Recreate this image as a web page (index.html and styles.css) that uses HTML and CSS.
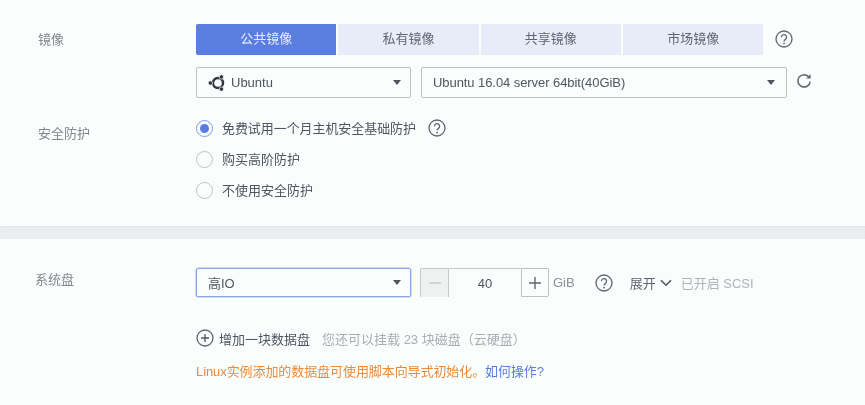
FILE: index.html
```html
<!DOCTYPE html>
<html lang="zh">
<head>
<meta charset="utf-8">
<title>镜像</title>
<link rel="stylesheet" href="styles.css">
</head>
<body>
<section class="panel panel-top">
  <div class="row row-image">
    <div class="label label-image">镜像</div>
    <div class="body">
      <div class="line tabs">
        <div class="tab tab-active">公共镜像</div>
        <div class="tab">私有镜像</div>
        <div class="tab">共享镜像</div>
        <div class="tab">市场镜像</div>
        <svg class="icon help help-tabs" viewBox="0 0 18 18"><use href="#q"/></svg>
      </div>
      <div class="line selects">
        <div class="select select-os">
          <svg class="ubuntu" viewBox="0 0 18 18">
            <circle cx="10" cy="9" r="5" fill="none" stroke="#2f3642" stroke-width="2.4"/>
            <circle cx="2.4" cy="9" r="2.2" fill="#2f3642" stroke="#f9fdfb" stroke-width=".7"/>
            <circle cx="13.4" cy="2.9" r="2.2" fill="#2f3642" stroke="#f9fdfb" stroke-width=".7"/>
            <circle cx="13.4" cy="15.1" r="2.2" fill="#2f3642" stroke="#f9fdfb" stroke-width=".7"/>
          </svg>
          <span class="select-text">Ubuntu</span><i class="caret"></i>
        </div>
        <div class="select select-version"><span class="select-text text-tight">Ubuntu 16.04 server 64bit(40GiB)</span><i class="caret"></i></div>
        <svg class="icon refresh" viewBox="0 0 16 16"><path d="M13.2 4.4A6.2 6.2 0 1 0 14.2 8.6" fill="none" stroke="#5f6673" stroke-width="1.5"/><path d="M14.6 1.2v4.4h-4.4z" fill="#5f6673"/></svg>
      </div>
    </div>
  </div>
  <div class="row row-security">
    <div class="label label-security">安全防护</div>
    <div class="radios">
      <div class="radio-line"><span class="radio radio-on"></span><span class="radio-text text-tight">免费试用一个月主机安全基础防护</span><svg class="icon help help-radio" viewBox="0 0 18 18"><use href="#q"/></svg></div>
      <div class="radio-line"><span class="radio"></span><span class="radio-text">购买高阶防护</span></div>
      <div class="radio-line"><span class="radio"></span><span class="radio-text">不使用安全防护</span></div>
    </div>
  </div>
</section>
<div class="band"></div>
<section class="panel panel-disk">
  <div class="row">
    <div class="label label-disk">系统盘</div>
    <div class="body">
      <div class="line disk-line">
        <div class="select select-disk"><span class="select-text">高IO</span><i class="caret"></i></div>
        <div class="stepper">
          <div class="step step-minus"><svg viewBox="0 0 14 14"><path d="M1 7h12" stroke="#c3c6cc" stroke-width="1.4"/></svg></div>
          <div class="step-value">40</div>
          <div class="step step-plus"><svg viewBox="0 0 14 14"><path d="M1 7h12M7 1v12" stroke="#5f6673" stroke-width="1.4"/></svg></div>
        </div>
        <span class="unit">GiB</span>
        <svg class="icon help help-disk" viewBox="0 0 18 18"><use href="#q"/></svg>
        <span class="expand">展开</span>
        <svg class="chevron" viewBox="0 0 12 8"><path d="M1 1.2l5 5 5-5" fill="none" stroke="#4f5562" stroke-width="1.6"/></svg>
        <span class="scsi">已开启 SCSI</span>
      </div>
      <div class="line add-line">
        <svg class="icon add-icon" viewBox="0 0 18 18"><circle cx="9" cy="9" r="8" fill="none" stroke="#5f6673" stroke-width="1.3"/><path d="M5 9h8M9 5v8" stroke="#4f5562" stroke-width="1.3"/></svg>
        <span class="add-text">增加一块数据盘</span>
        <span class="add-hint">您还可以挂载 23 块磁盘（云硬盘）</span>
      </div>
      <div class="note">Linux实例添加的数据盘可使用脚本向导式初始化。<span class="note-link">如何操作?</span></div>
    </div>
  </div>
</section>
<svg class="defs" width="0" height="0"><defs>
  <g id="q">
    <circle cx="9" cy="9" r="8" fill="none" stroke="#5f6673" stroke-width="1.3"/>
    <path d="M6.4 7.2a2.6 2.6 0 1 1 4 2.2c-.9.6-1.4 1-1.4 2.2" fill="none" stroke="#5f6673" stroke-width="1.3"/>
    <circle cx="9" cy="13.6" r=".9" fill="#5f6673"/>
  </g>
</defs></svg>
</body>
</html>
```

FILE: styles.css
```css
* { box-sizing: border-box; }
html, body { margin: 0; padding: 0; }
body {
  width: 865px;
  height: 405px;
  overflow: hidden;
  background: #f9fdfb;
  color: #4f5562;
  font-family: "Liberation Sans", "Noto Sans CJK SC", sans-serif;
  font-size: 13px;
  filter: blur(0.45px);
}
.defs { position: absolute; }
.panel-top { height: 226px; padding-top: 24px; }
.band { height: 13px; background: #ebeef0; box-shadow: inset 0 1px 1px #e2e5e8; }
.panel-disk { height: 166px; padding-top: 29px; }
.row { display: flex; }
.label { width: 196px; color: #82878f; }
.label-image { padding: 5px 0 0 38px; }
.label-security { padding: 11px 0 0 38px; }
.label-disk { padding: 1px 0 0 35px; }
.body { flex: 1; min-width: 0; }
.line { display: flex; align-items: center; }
.tabs { gap: 2px; height: 31px; }
.tab {
  width: 140.33px;
  height: 31px;
  line-height: 30px;
  text-align: center;
  background: #e8ecf8;
  color: #5f6673;
}
.tab-active { background: #5a7de0; color: #e6ecfb; border-radius: 2px 0 0 2px; }
.icon { flex: none; width: 18px; height: 18px; display: block; }
.help-tabs { margin-left: 10px; margin-top: -1px; }
.selects { margin-top: 12px; height: 31px; }
.select {
  position: relative;
  display: flex;
  align-items: center;
  height: 31px;
  border: 1px solid #bcc0c7;
  border-radius: 2px;
  color: #4f5562;
}
.select-os { width: 215px; padding-left: 11px; }
.select-version { width: 366px; margin-left: 10px; padding-left: 11px; }
.select-version .caret { right: 11px; }
.text-tight { letter-spacing: -0.07px; }
.ubuntu { width: 18px; height: 18px; flex: none; margin-right: 5px; }
.caret {
  position: absolute;
  right: 9px;
  top: 12px;
  border: 4px solid transparent;
  border-top: 5px solid #4f5562;
  border-bottom: 0;
}
.refresh { width: 16px; height: 16px; margin-left: 9px; margin-top: -3px; }
.row-security { margin-top: 14px; }
.radios { display: flex; flex-direction: column; }
.radio-line { display: flex; align-items: center; height: 31px; }
.radio {
  width: 17px;
  height: 17px;
  flex: none;
  margin-top: 2px;
  border: 1px solid #bcc0c7;
  border-radius: 50%;
  background: #fcfefd;
  margin-right: 9px;
}
.radio-on {
  border-color: #7f9ae8;
  background: #5a7de0;
  background-clip: padding-box;
  position: relative;
}
.radio-on::after {
  content: "";
  position: absolute;
  inset: 0;
  border: 3px solid #f9fdfb;
  border-radius: 50%;
}
.radio-text { color: #4f5562; }
.help-radio { margin-left: 12px; }
.disk-line { height: 29px; }
.select-disk { width: 215px; height: 29px; padding-left: 11px; border-color: #89a3ea; box-shadow: 0 0 0 .5px #a9bdf0; }
.select-disk .caret { top: 11px; }
.stepper {
  display: flex;
  width: 129px;
  height: 29px;
  margin-left: 9px;
  flex: none;
}
.step { display: flex; align-items: center; justify-content: center; flex: none; }
.step svg { width: 14px; height: 14px; display: block; }
.step-minus {
  width: 29px;
  background: #eff1f1;
  border: 1px solid #c6c9ce;
  border-bottom: 0;
  border-radius: 2px 0 0 0;
}
.step-value {
  flex: 1;
  text-align: center;
  line-height: 29px;
  color: #4f5562;
  border-top: 1px solid #c6c9ce;
}
.step-plus {
  width: 28px;
  border: 1px solid #bcc0c7;
  border-radius: 0 2px 2px 0;
}
.unit { margin-left: 4px; color: #8a8f96; }
.help-disk { margin-left: 20px; }
.expand { margin-left: 17px; color: #5f6673; }
.chevron { width: 12px; height: 8px; margin-left: 4px; flex: none; }
.scsi { margin-left: 9px; color: #b0b4b9; }
.add-line { margin-top: 32px; height: 18px; }
.add-icon { width: 18px; height: 18px; }
.add-text { margin-left: 5px; color: #4f5562; }
.add-hint { margin-left: 12px; color: #a9adb3; }
.note { margin-top: 16px; color: #ea8b3c; line-height: 18px; letter-spacing: -0.08px; }
.note-link { color: #5a7de0; }
```
